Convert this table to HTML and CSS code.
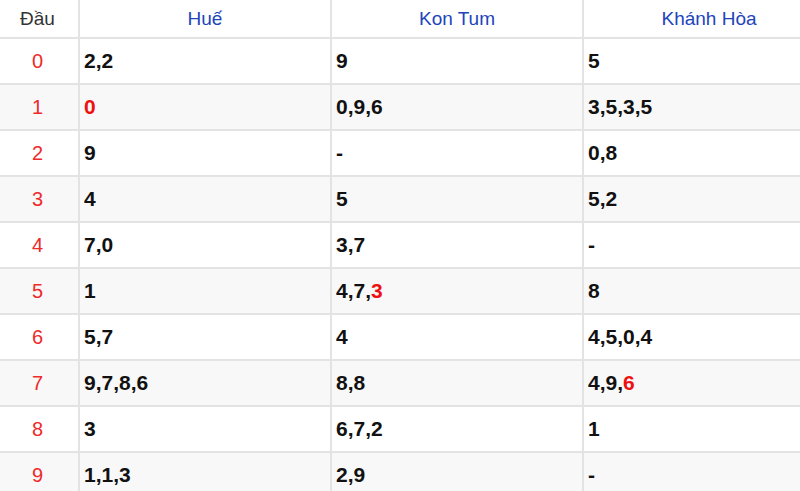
FILE: index.html
```html
<!DOCTYPE html>
<html lang="vi">
<head>
<meta charset="utf-8">
<link rel="stylesheet" href="styles.css">
</head>
<body>
<div class="wrap">
<table class="loto">
  <colgroup>
    <col class="c-head"><col class="c-val"><col class="c-val"><col class="c-val">
  </colgroup>
  <thead>
    <tr><th class="dau">Đầu</th><th>Huế</th><th>Kon Tum</th><th>Khánh Hòa</th></tr>
  </thead>
  <tbody>
    <tr><td class="idx">0</td><td>2,2</td><td>9</td><td>5</td></tr>
    <tr><td class="idx">1</td><td><span class="hot">0</span></td><td>0,9,6</td><td>3,5,3,5</td></tr>
    <tr><td class="idx">2</td><td>9</td><td>-</td><td>0,8</td></tr>
    <tr><td class="idx">3</td><td>4</td><td>5</td><td>5,2</td></tr>
    <tr><td class="idx">4</td><td>7,0</td><td>3,7</td><td>-</td></tr>
    <tr><td class="idx">5</td><td>1</td><td>4,7,<span class="hot">3</span></td><td>8</td></tr>
    <tr><td class="idx">6</td><td>5,7</td><td>4</td><td>4,5,0,4</td></tr>
    <tr><td class="idx">7</td><td>9,7,8,6</td><td>8,8</td><td>4,9,<span class="hot">6</span></td></tr>
    <tr><td class="idx">8</td><td>3</td><td>6,7,2</td><td>1</td></tr>
    <tr><td class="idx">9</td><td>1,1,3</td><td>2,9</td><td>-</td></tr>
  </tbody>
</table>
</div>
</body>
</html>
```
FILE: styles.css
```css
html, body {
  margin: 0;
  padding: 0;
  background: #fff;
}
.wrap {
  width: 800px;
  height: 491px;
  overflow: hidden;
}
.loto {
  border-collapse: collapse;
  table-layout: fixed;
  width: 836px;
  margin: -2px 0 0 -2px;
  font-family: "Liberation Sans", Arial, sans-serif;
}
.c-head { width: 80px; }
.c-val { width: 252px; }
.loto th,
.loto td {
  border: 2px solid #e3e3e3;
  padding: 0;
}
.loto th {
  height: 37px;
  font-weight: normal;
  font-size: 19px;
  color: #2244bb;
  text-align: center;
  vertical-align: middle;
}
.loto th.dau {
  color: #333;
  padding-right: 3px;
}
.loto td {
  height: 44px;
  font-size: 21px;
  font-weight: bold;
  color: #111;
  padding-left: 4px;
  vertical-align: middle;
}
.loto td.idx {
  text-align: center;
  padding-left: 0;
  padding-right: 3px;
  font-size: 20px;
  font-weight: normal;
  color: #ee2a2a;
}
.loto tbody tr:nth-child(even) td {
  background: #f8f8f8;
}
.hot {
  color: #ee1111;
}
```
